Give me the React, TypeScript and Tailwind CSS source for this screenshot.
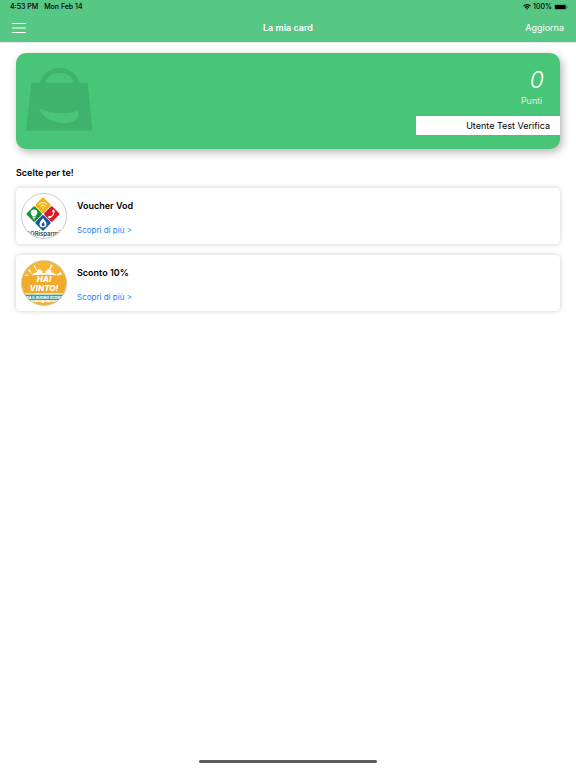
interface Offer {
  id: string;
  title: string;
  Logo: () => React.JSX.Element;
}

const offers: Offer[] = [
  { id: 'voucher', title: 'Voucher Vod', Logo: RisparmioLogo },
  { id: 'sconto', title: 'Sconto 10%', Logo: HaiVintoLogo },
];

export default function App() {
  return (
    <div className="min-h-screen flex flex-col bg-white font-['Inter','Liberation_Sans',sans-serif] text-black">
      {/* Header */}
      <header className="bg-[#57c785] border-b border-gray-200">
        <div className="flex items-center justify-between h-3.5 pl-2.5 pr-2 text-[7px] font-medium">
          <div className="flex gap-1.5">
            <span>4:53 PM</span>
            <span>Mon Feb 14</span>
          </div>
          <div className="flex items-center gap-0.5">
            <WifiIcon />
            <span>100%</span>
            <BatteryIcon />
          </div>
        </div>
        <div className="grid grid-cols-3 items-center h-7 px-3 text-[9px] text-white">
          <button aria-label="Menu" className="w-3.5">
            <svg viewBox="0 0 14 12" className="block w-3.5 h-3" stroke="white" strokeWidth="1.2">
              <path d="M0 1.5h14M0 6h14M0 10.5h14" />
            </svg>
          </button>
          <h1 className="text-center font-semibold">La mia card</h1>
          <button className="justify-self-end">Aggiorna</button>
        </div>
      </header>

      <main className="flex-1 px-4 pt-2.5">
        {/* Points card */}
        <section className="flex justify-between h-24 rounded-[10px] bg-[#49c578] shadow-[2px_3px_8px_rgba(0,0,0,0.3)]">
          <BagIcon />
          <div className="flex flex-col items-end w-36 pt-3">
            <p className="pr-4 text-[23px] leading-[30px] italic font-light text-white">0</p>
            <p className="h-[21px] pr-[18px] text-[9px] leading-3 font-light text-white">Punti</p>
            <p className="w-full h-[19px] pr-2.5 bg-white text-right text-[9px] leading-[19px]">
              Utente Test Verifica
            </p>
          </div>
        </section>

        {/* Offers */}
        <h2 className="mt-4 text-[9px] leading-4 font-semibold">Scelte per te!</h2>
        <ul className="mt-[7px] flex flex-col gap-[11px]">
          {offers.map((offer) => (
            <OfferCard key={offer.id} offer={offer} />
          ))}
        </ul>
      </main>

      {/* Home indicator */}
      <div className="w-[31%] h-[3px] mx-auto mb-[5px] rounded-full bg-[#5c5c5c]" />
    </div>
  );
}

function OfferCard({ offer }: { offer: Offer }) {
  const { title, Logo } = offer;
  return (
    <li className="flex items-center gap-2.5 h-14 px-[5px] rounded-[4px] bg-white shadow-[0_0_5px_rgba(0,0,0,0.2)]">
      <Logo />
      <div className="flex flex-col items-start gap-3 pt-[3px]">
        <h3 className="text-[9px] leading-3 font-semibold">{title}</h3>
        <a href="#" className="text-[8px] leading-3 text-[#1682fb]">
          Scopri di più &gt;
        </a>
      </div>
    </li>
  );
}

function WifiIcon() {
  return (
    <svg viewBox="0 0 16 12" className="w-2 h-1.5" fill="none" stroke="black" strokeWidth="2.2">
      <path d="M1 4.2a10 10 0 0 1 14 0M3.8 7.2a6 6 0 0 1 8.4 0" />
      <path d="M8 11.6 5.8 9.3a3.2 3.2 0 0 1 4.4 0Z" fill="black" stroke="none" />
    </svg>
  );
}

function BatteryIcon() {
  return (
    <svg viewBox="0 0 28 12" className="w-3.5 h-1.5">
      <rect x="0.7" y="0.7" width="24" height="10.6" rx="3" fill="none" stroke="black" strokeOpacity="0.45" />
      <rect x="2" y="2" width="21.4" height="8" rx="1.8" />
      <path d="M26 4v4q1.5-.6 1.5-2T26 4Z" fillOpacity="0.5" />
    </svg>
  );
}

function BagIcon() {
  return (
    <svg viewBox="0 0 67 63" className="w-[67px] h-[63px] ml-2.5 mt-[15px]">
      <path d="M16 15C20 5 26 2.500 33.500 2.500S47 5 51 15" fill="none" stroke="#3fb36b" strokeWidth="5" />
      <path
        fillRule="evenodd"
        fill="#3fb36b"
        d="M5.500 14.700H61.500L66.500 62.500H0ZM13 40.500C16 49 26 55 39 55C50 55 53.500 50 52.500 42.500C41 47 24 46 13 40.500Z"
      />
    </svg>
  );
}

function RisparmioLogo() {
  return (
    <svg viewBox="0 0 46 46" className="w-[46px] h-[46px] shrink-0" role="img" aria-label="GORisparmio">
      <clipPath id="risparmio">
        <circle cx="23" cy="23" r="22.500" />
      </clipPath>
      <g clipPath="url(#risparmio)">
        <rect width="46" height="46" fill="white" />
        <g transform="translate(22 21) rotate(45)">
          <rect x="-12" y="-12" width="11.700" height="11.700" rx="1.500" fill="#f8b114" />
          <rect x="0.300" y="-12" width="11.700" height="11.700" rx="1.500" fill="#dc1825" />
          <rect x="-12" y="0.300" width="11.700" height="11.700" rx="1.500" fill="#159235" />
          <rect x="0.300" y="0.300" width="11.700" height="11.700" rx="1.500" fill="#1457a5" />
        </g>
        {/* Wifi */}
        <g fill="none" stroke="white" strokeWidth="1">
          <path d="M18 11.200q4-3.400 8 0M19.500 13.200q2.500-2.100 5 0" />
          <circle cx="22" cy="15" r="0.700" fill="white" stroke="none" />
        </g>
        {/* Bulb */}
        <path
          fill="white"
          d="M13 16.500a3.300 3.300 0 0 1 3.300 3.300c0 1.700-1.500 2.300-1.700 3.700h-3.200c-.2-1.400-1.700-2-1.700-3.700a3.300 3.300 0 0 1 3.300-3.300ZM11.500 24.200h3v.8h-3ZM12 25.600h2v.7h-2Z"
        />
        {/* Phone */}
        <path d="M32.300 18c1.200 3-.4 5.500-4 6.300" fill="none" stroke="white" strokeWidth="1.200" />
        <path d="M31 17.300l2-.8 1 2.600-2 .8ZM27 23.500l2.600-.8.800 2-2.600.9Z" fill="white" />
        {/* Drop */}
        <path d="M22 25c1 2 3.500 3.600 3.500 6a3.500 3.500 0 0 1-7 0c0-2.400 2.500-4 3.500-6Z" fill="white" />
        <path d="M22.300 28.500c.2 1.400 1.300 1.800 1.300 3.200a1.500 1.500 0 0 1-3 .1c0-1.400 1.400-1.700 1.700-3.300Z" fill="#1457a5" />
        <text y="43.300" fontSize="6" fontWeight="700" className="font-['Inter',sans-serif]">
          <tspan x="4.500" fill="#dc1825">G</tspan>
          <tspan fill="#1457a5">O</tspan>
          <tspan fill="#222222" fontWeight="500">Risparmio</tspan>
        </text>
      </g>
      <circle cx="23" cy="23" r="22.500" fill="none" stroke="#c9c9c9" strokeWidth="1" />
    </svg>
  );
}

function HaiVintoLogo() {
  return (
    <svg viewBox="0 0 46 46" className="w-[46px] h-[46px] shrink-0" role="img" aria-label="Hai vinto">
      <clipPath id="vinto">
        <circle cx="23" cy="23" r="22.500" />
      </clipPath>
      <g clipPath="url(#vinto)">
        <rect width="46" height="46" fill="#fffaf0" />
        {/* Rays */}
        <circle cx="23" cy="23" r="18.500" fill="none" stroke="#f5b23a" strokeWidth="8" />
        <circle
          cx="23"
          cy="23"
          r="17.500"
          fill="none"
          stroke="#fffaf0"
          strokeWidth="5"
          strokeDasharray="2 3.500"
        />
        {/* Cups */}
        <path d="M17 1h12l-1.500 8-3 2v2h-3v-2l-3-2Z" fill="#f7b62f" />
        <path d="M8 8l5-2 3 6-5 2ZM38 8l-5-2-3 6 5 2Z" fill="#f7b62f" />
        {/* Ribbon */}
        <path d="M0 16.500Q23 13 46 16.500V33.500H0Z" fill="#f2aa2b" />
        <rect y="33.500" width="46" height="1.200" fill="#fffaf0" />
        <rect y="34.700" width="46" height="5.600" fill="#20a5ac" />
        <rect y="40.300" width="46" height="1.400" fill="#fffaf0" />
        <g
          fill="white"
          textAnchor="middle"
          fontStyle="italic"
          fontWeight="800"
          className="font-['Inter',sans-serif]"
        >
          <text x="23" y="22.300" fontSize="8">HAI</text>
          <text x="23" y="30.800" fontSize="8">VINTO!</text>
          <text x="23" y="38.800" fontSize="3.500" fontStyle="normal">TIRA IL BUONO SCONTO</text>
        </g>
      </g>
      <circle cx="23" cy="23" r="22.500" fill="none" stroke="#d6c8a4" strokeWidth="1" />
    </svg>
  );
}
